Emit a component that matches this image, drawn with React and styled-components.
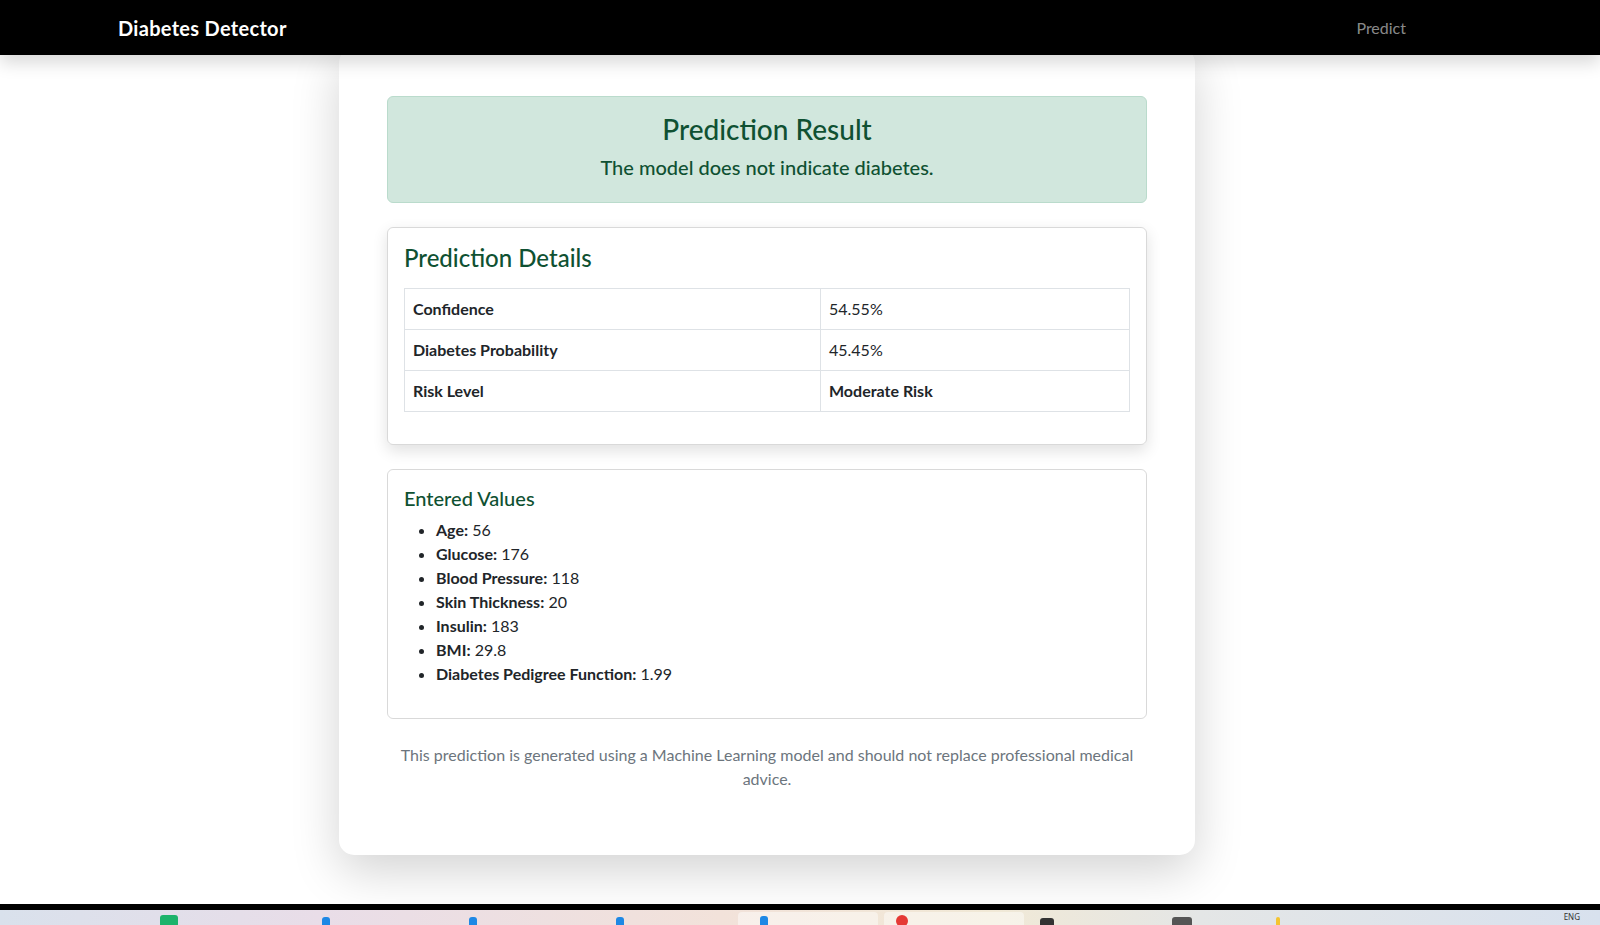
import styled, { createGlobalStyle } from "styled-components";

const GlobalStyle = createGlobalStyle`
  *, *::before, *::after { box-sizing: border-box; }
  body {
    margin: 0;
    font-family: Lato, "Noto Sans", sans-serif;
    color: #212529;
    background: #fff;
  }
`;

const Page = styled.div`
  height: 100vh;
  display: flex;
  flex-direction: column;
  overflow: hidden;
`;

const Navbar = styled.nav`
  position: relative;
  z-index: 2;
  flex: 0 0 55px;
  display: flex;
  align-items: center;
  justify-content: space-between;
  padding: 0 194px 0 118px;
  background: #000;
  box-shadow: 0 0.5rem 1rem rgba(0, 0, 0, 0.15);
`;

const Brand = styled.a`
  color: #fff;
  font-size: 20px;
  font-weight: 700;
  letter-spacing: 0.3px;
  text-decoration: none;
  line-height: 30px;
`;

const NavLink = styled.a`
  color: rgba(255, 255, 255, 0.55);
  font-size: 16px;
  text-decoration: none;
`;

const Main = styled.main`
  flex: 1;
  min-height: 0;
  display: flex;
  justify-content: flex-start;
  align-items: flex-start;
  padding-left: 339px;
`;

const ResultCard = styled.section`
  width: 856px;
  margin-top: -7px;
  padding: 48px;
  background: #fff;
  border-radius: 15px;
  box-shadow: 0 1rem 3rem rgba(0, 0, 0, 0.175);
`;

const Alert = styled.div`
  margin-bottom: 24px;
  padding: 16px 16px 15px;
  background: #d1e7dd;
  border: 1px solid #badbcc;
  border-radius: 6px;
  color: #0f5132;
  text-align: center;
`;

const AlertHeading = styled.h3`
  margin: 0 0 5px;
  font-size: 28px;
  font-weight: 500;
  line-height: 1.2;
`;

const AlertText = styled.p`
  margin: 0 0 5px;
  font-size: 20px;
  font-weight: 500;
  line-height: 1.5;
`;

const Panel = styled.div`
  margin-bottom: 24px;
  padding: 16px;
  border: 1px solid rgba(0, 0, 0, 0.15);
  border-radius: 6px;
  box-shadow: ${(p) => (p.$raised ? "0 0.35rem 0.9rem rgba(0, 0, 0, 0.12)" : "none")};
`;

const PanelTitle = styled.h4`
  margin: 0 0 ${(p) => (p.$small ? "8px" : "16px")};
  font-size: ${(p) => (p.$small ? "20px" : "24px")};
  font-weight: 500;
  line-height: 1.2;
  color: #0f5132;
`;

const Table = styled.table`
  width: 100%;
  margin-bottom: 16px;
  border-collapse: collapse;
  font-size: 16px;
  line-height: 24px;

  th,
  td {
    padding: 8px;
    border: 1px solid #dee2e6;
    text-align: left;
    vertical-align: top;
  }

  th {
    width: 416px;
    font-weight: 700;
  }
`;

const ValueCell = styled.td`
  font-weight: ${(p) => (p.$bold ? 700 : 400)};
`;

const ValueList = styled.ul`
  margin: 0 0 16px;
  padding-left: 32px;
  font-size: 16px;
  line-height: 24px;

  strong {
    font-weight: 700;
  }
`;

const Note = styled.p`
  margin: 24px 0 16px;
  color: #6c757d;
  font-size: 16px;
  line-height: 24px;
  text-align: center;
`;

const FooterBar = styled.div`
  flex: 0 0 6px;
  background: #000;
`;

const Taskbar = styled.div`
  flex: 0 0 15px;
  display: flex;
  align-items: flex-start;
  padding-top: 2px;
  background: linear-gradient(
    90deg,
    #d9e1ec 0%,
    #e9dde8 20%,
    #f2e2da 45%,
    #f1e9d6 62%,
    #e4e6e6 75%,
    #d8e1ee 100%
  );
  overflow: hidden;
`;

const TaskIcon = styled.span`
  flex: 0 0 auto;
  margin-left: ${(p) => p.$gap}px;
  margin-top: ${(p) => p.$top || 3}px;
  width: ${(p) => p.$w || 10}px;
  height: 12px;
  border-radius: ${(p) => (p.$round ? "50%" : "3px")};
  background: ${(p) => p.$color};
`;

const TaskTab = styled.span`
  flex: 0 0 auto;
  display: flex;
  justify-content: flex-start;
  margin-left: ${(p) => p.$gap}px;
  width: 140px;
  height: 14px;
  padding-left: ${(p) => p.$inset}px;
  border-radius: 4px 4px 0 0;
  background: rgba(255, 255, 255, 0.45);
`;

const TrayText = styled.span`
  margin-left: auto;
  margin-right: 20px;
  margin-top: 0;
  font-family: "Noto Sans", sans-serif;
  font-size: 8px;
  line-height: 10px;
  color: #333;
`;

const details = [
  { label: "Confidence", value: "54.55%" },
  { label: "Diabetes Probability", value: "45.45%" },
  { label: "Risk Level", value: "Moderate Risk", bold: true },
];

const entered = [
  ["Age", "56"],
  ["Glucose", "176"],
  ["Blood Pressure", "118"],
  ["Skin Thickness", "20"],
  ["Insulin", "183"],
  ["BMI", "29.8"],
  ["Diabetes Pedigree Function", "1.99"],
];

export default function App() {
  return (
    <>
      <GlobalStyle />
      <Page>
        <Navbar>
          <Brand href="#">Diabetes Detector</Brand>
          <NavLink href="#">Predict</NavLink>
        </Navbar>

        <Main>
          <ResultCard>
            <Alert>
              <AlertHeading>Prediction Result</AlertHeading>
              <AlertText>The model does not indicate diabetes.</AlertText>
            </Alert>

            <Panel $raised>
              <PanelTitle>Prediction Details</PanelTitle>
              <Table>
                <tbody>
                  {details.map((row) => (
                    <tr key={row.label}>
                      <th>{row.label}</th>
                      <ValueCell $bold={row.bold}>{row.value}</ValueCell>
                    </tr>
                  ))}
                </tbody>
              </Table>
            </Panel>

            <Panel>
              <PanelTitle $small>Entered Values</PanelTitle>
              <ValueList>
                {entered.map(([label, value]) => (
                  <li key={label}>
                    <strong>{label}:</strong> {value}
                  </li>
                ))}
              </ValueList>
            </Panel>

            <Note>
              This prediction is generated using a Machine Learning model and
              should not replace professional medical advice.
            </Note>
          </ResultCard>
        </Main>

        <FooterBar />
        <Taskbar>
          <TaskIcon $gap={160} $w={18} $color="#1db36b" />
          <TaskIcon $gap={144} $w={8} $top={5} $color="#1e88e5" />
          <TaskIcon $gap={139} $w={8} $top={5} $color="#1e88e5" />
          <TaskIcon $gap={139} $w={8} $top={5} $color="#1e88e5" />
          <TaskTab $gap={114} $inset={22}>
            <TaskIcon $gap={0} $w={8} $top={4} $color="#1e88e5" />
          </TaskTab>
          <TaskTab $gap={6} $inset={12}>
            <TaskIcon $gap={0} $w={12} $top={3} $round $color="#e53935" />
          </TaskTab>
          <TaskIcon $gap={16} $w={14} $top={6} $color="#333" />
          <TaskIcon $gap={118} $w={20} $top={5} $color="#555" />
          <TaskIcon $gap={84} $w={4} $top={5} $color="#f4c430" />
          <TrayText>ENG</TrayText>
        </Taskbar>
      </Page>
    </>
  );
}
